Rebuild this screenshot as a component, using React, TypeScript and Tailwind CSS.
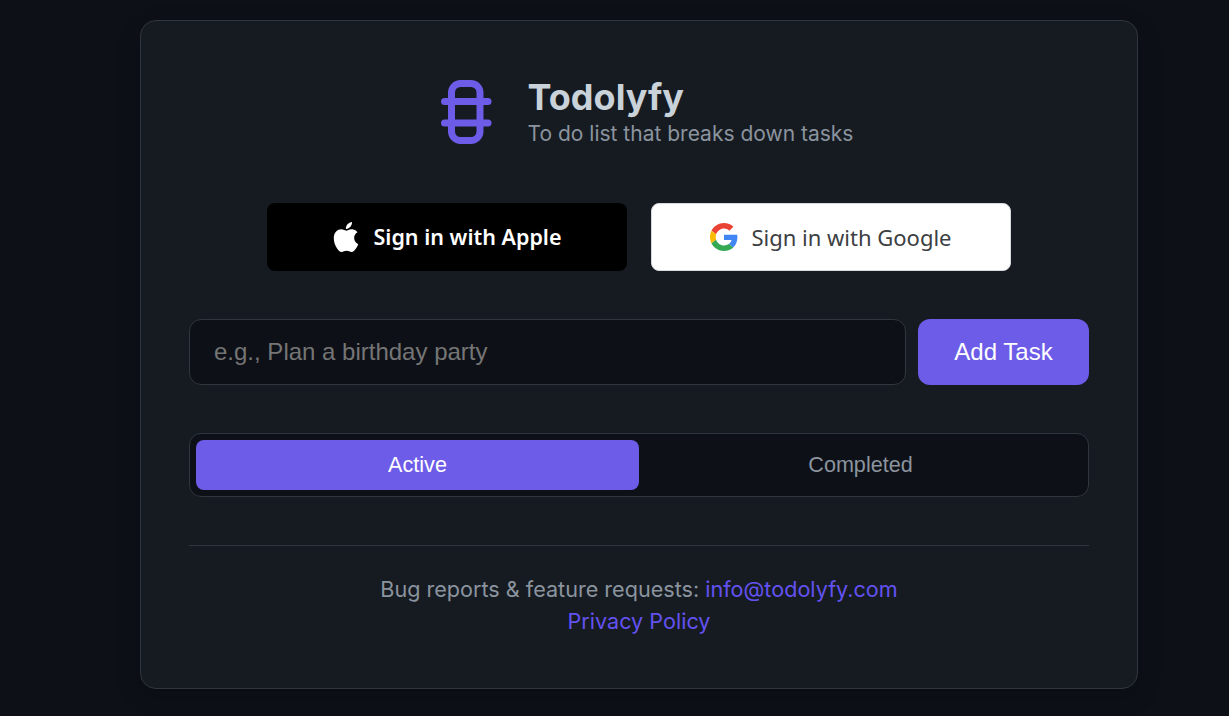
const App = () => {
  return (
    <div className="min-h-[716px] overflow-hidden bg-[#0d1017] pt-5 pl-[140px] font-['Inter',sans-serif]">
      <div className="w-[998px] h-[669px] rounded-2xl border border-[#30363d] bg-[#161b22] pt-[59px] px-12 shadow-[0_8px_24px_rgba(0,0,0,0.2)]">
        <header className="flex h-[66px] items-start justify-center gap-[36px] pl-[15px]">
          <svg width="52" height="66" viewBox="0 0 52 66" fill="none" stroke="#6c5ce7" strokeWidth="7" strokeLinecap="round">
            <rect x="11.5" y="3.5" width="28.5" height="57" rx="9" />
            <path d="M4.5 21.5H48" />
            <path d="M4.5 43H48" />
          </svg>
          <div className="flex flex-col">
            <h1 className="text-[36px] leading-[40px] font-bold text-[#c9d1d9] mt-[-3px]">Todolyfy</h1>
            <p className="text-[21px] leading-[28px] text-[#8b949e] mt-[3px]">To do list that breaks down tasks</p>
          </div>
        </header>

        <div className="mt-[57px] flex justify-center gap-6">
          <button className="h-[68px] w-[360px] rounded-lg bg-black flex items-center justify-center gap-[13px] font-['Noto_Sans',sans-serif] text-[21.5px] font-semibold text-white">
            <svg width="28" height="30" viewBox="0 0 814 1000" fill="#fff">
              <path d="M788.1 340.9c-5.8 4.5-108.2 62.2-108.2 190.5 0 148.4 130.3 200.9 134.2 202.2-.6 3.2-20.7 71.9-68.7 141.9-42.8 61.6-87.5 123.1-155.5 123.1s-85.5-39.5-164-39.5c-76.5 0-103.7 40.8-165.9 40.8s-105.6-57-155.5-127C46.7 790.7 0 663 0 541.8c0-194.4 126.4-297.5 250.8-297.5 66.1 0 121.2 43.4 162.7 43.4 39.5 0 101.1-46 176.3-46 28.5 0 130.9 2.6 198.3 99.2zm-234-181.5c31.1-36.9 53.1-88.1 53.1-139.3 0-7.1-.6-14.3-1.9-20.1-50.6 1.9-110.8 33.7-147.1 75.8-28.5 32.4-55.1 83.6-55.1 135.5 0 7.8 1.3 15.6 1.9 18.1 3.2.6 8.4 1.3 13.6 1.3 45.4 0 102.5-30.4 135.5-71.3z" />
            </svg>
            <span>Sign in with Apple</span>
          </button>
          <button className="h-[68px] w-[360px] rounded-lg border border-[#d8d8de] bg-white flex items-center justify-center gap-[13px] font-['Noto_Sans',sans-serif] text-[22px] text-[#3c4043]">
            <svg width="28" height="28" viewBox="0 0 48 48">
              <path fill="#EA4335" d="M24 9.5c3.54 0 6.71 1.22 9.21 3.6l6.85-6.85C35.9 2.38 30.47 0 24 0 14.62 0 6.51 5.38 2.56 13.22l7.98 6.19C12.43 13.72 17.74 9.5 24 9.5z" />
              <path fill="#4285F4" d="M46.98 24.55c0-1.57-.15-3.09-.38-4.55H24v9.02h12.94c-.58 2.96-2.26 5.48-4.78 7.18l7.73 6c4.51-4.18 7.09-10.36 7.09-17.65z" />
              <path fill="#FBBC05" d="M10.53 28.59c-.48-1.45-.76-2.99-.76-4.59s.27-3.14.76-4.59l-7.98-6.19C.92 16.46 0 20.12 0 24c0 3.88.92 7.54 2.56 10.78l7.97-6.19z" />
              <path fill="#34A853" d="M24 48c6.48 0 11.93-2.13 15.89-5.81l-7.73-6c-2.15 1.45-4.92 2.3-8.16 2.3-6.26 0-11.57-4.22-13.47-9.91l-7.98 6.19C6.51 42.62 14.62 48 24 48z" />
            </svg>
            <span>Sign in with Google</span>
          </button>
        </div>

        <form className="mt-12 flex gap-3">
          <input
            placeholder="e.g., Plan a birthday party"
            className="h-[66px] flex-1 min-w-0 rounded-xl border border-[#30363d] bg-[#0d1017] px-6 font-['Liberation_Sans',sans-serif] text-[24px] text-white outline-none placeholder:text-[#757575]"
          />
          <button type="button" className="h-[66px] w-[171px] rounded-xl bg-[#6c5ce7] font-['Liberation_Sans',sans-serif] text-[24px] text-white">
            Add Task
          </button>
        </form>

        <div className="mt-12 flex h-16 rounded-xl border border-[#30363d] bg-[#0d1017] p-[6px] font-['Liberation_Sans',sans-serif] text-[21.6px]">
          <button className="flex-1 rounded-lg bg-[#6c5ce7] text-white">Active</button>
          <button className="flex-1 rounded-lg text-[#8b949e]">Completed</button>
        </div>

        <footer className="mt-12 border-t border-[#30363d] pt-[27px] text-center text-[21.6px] leading-8 text-[#8b949e]">
          <p>
            Bug reports &amp; feature requests: <a href="#" className="text-[#6352f0]">info@todolyfy.com</a>
          </p>
          <p>
            <a href="#" className="text-[#6352f0]">Privacy Policy</a>
          </p>
        </footer>
      </div>
    </div>
  );
};

export default App;
